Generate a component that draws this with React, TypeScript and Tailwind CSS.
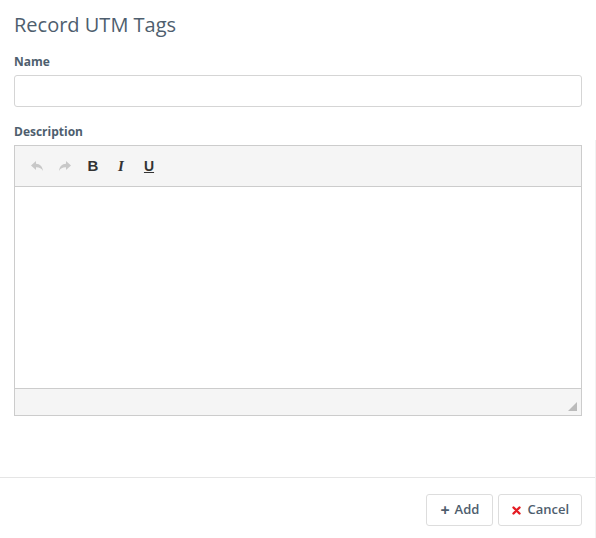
import React from "react";

const ReplyIcon = ({ flip = false }: { flip?: boolean }) => (
  <svg width="14" height="12" viewBox="0 0 14 12" className={flip ? "-scale-x-100" : ""}>
    <path d="M6 1 L1 5.5 L6 10 V7.2 C9 7 11.5 8 13 11 C12.6 6.6 10 4 6 3.8 Z" fill="#c8c8c8" />
  </svg>
);

export default function App() {
  return (
    <div
      className="relative w-[596px] h-[538px] bg-white flex flex-col"
      style={{ fontFamily: '"Open Sans", sans-serif' }}
    >
      {/* faint scroll edge on the right */}
      <div className="absolute right-0 top-[140px] bottom-0 w-px bg-[#f2f2f2]" />

      <div className="px-[14px] pt-[10px] flex-1">
        <h1 className="text-[20px] leading-[30px] text-[#4e5e6e] font-normal">Record UTM Tags</h1>

        <label className="block mt-[14px] text-[12px] font-bold text-[#4e5e6e] leading-[16px]">Name</label>
        <input className="mt-[5px] block w-full h-[32px] border border-[#d5d5d5] rounded-[3px] outline-none" />

        <label className="block mt-[17px] text-[12px] font-bold text-[#4e5e6e] leading-[16px]">Description</label>
        <div className="mt-[5px] border border-[#cccccc] flex flex-col h-[271px]">
          <div className="h-[41px] bg-[#f5f5f5] border-b border-[#cccccc] flex items-center pl-[15px] gap-[14px]">
            <ReplyIcon />
            <ReplyIcon flip />
            <span className="text-[15px] font-bold text-[#333] w-[14px] text-center" style={{ fontFamily: '"Liberation Sans", sans-serif' }}>B</span>
            <span className="text-[15px] font-bold italic text-[#333] w-[14px] text-center" style={{ fontFamily: '"Liberation Serif", serif' }}>I</span>
            <span className="text-[14px] font-bold underline text-[#333] w-[14px] text-center" style={{ fontFamily: '"Liberation Sans", sans-serif' }}>U</span>
          </div>
          <div className="flex-1 bg-white" />
          <div className="h-[27px] bg-[#f5f5f5] border-t border-[#cccccc] flex items-end justify-end pr-[4px] pb-[4px]">
            <svg width="9" height="9" viewBox="0 0 9 9">
              <path d="M9 0 V9 H0 Z" fill="#bbbbbb" />
            </svg>
          </div>
        </div>
      </div>

      <div className="border-t border-[#e5e5e5] h-[61px] flex items-start justify-end gap-[5px] pr-[14px] pt-[16px]">
        <button className="h-[32px] px-[13px] border border-[#dddddd] rounded-[3px] bg-white flex items-center gap-[5px] text-[13px] font-semibold text-[#4e5e6e]">
          <span className="text-[16px] leading-none font-bold">+</span>
          Add
        </button>
        <button className="h-[32px] pl-[13px] pr-[12px] border border-[#dddddd] rounded-[3px] bg-white flex items-center gap-[6px] text-[13px] font-semibold text-[#4e5e6e]">
          <svg width="9" height="9" viewBox="0 0 9 9">
            <path d="M1.5 1.5 L7.5 7.5 M7.5 1.5 L1.5 7.5" stroke="#e51c23" strokeWidth="2.4" strokeLinecap="round" />
          </svg>
          Cancel
        </button>
      </div>
    </div>
  );
}
